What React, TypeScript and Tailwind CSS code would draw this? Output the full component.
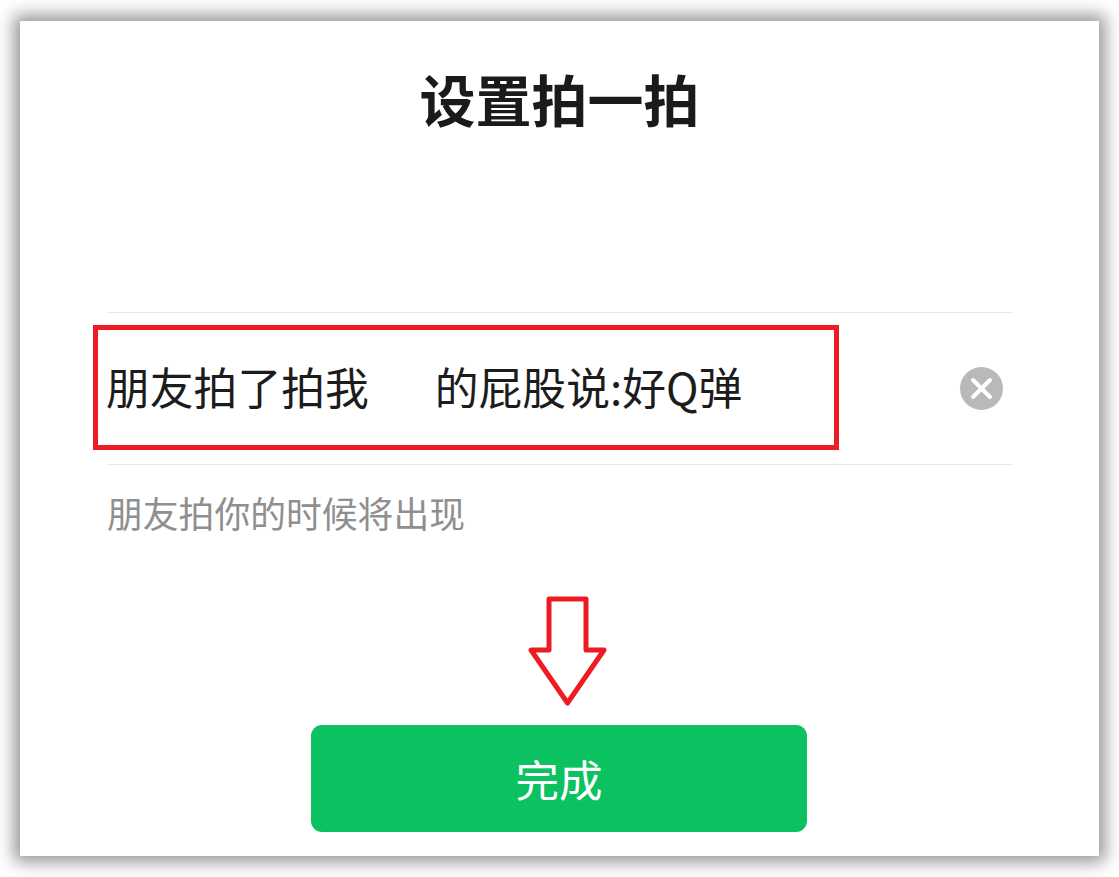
const CJK = 'font-["Noto_Sans_CJK_SC","Noto_Sans",sans-serif]';

function ArrowDown() {
  return (
    <svg width="80" height="112" viewBox="0 0 80 112" fill="none" className="block">
      <path
        d="M21 3H58V54H76L39.500 107L3 54H21Z"
        stroke="#ed1c24"
        strokeWidth="5"
        strokeLinejoin="round"
      />
    </svg>
  );
}

export default function App() {
  return (
    <div className={`w-[1119px] h-[877px] bg-white pt-[21px] pl-[20px] overflow-hidden ${CJK}`}>
      <div className="w-[1079px] h-[835px] bg-white shadow-[0_0_16px_6px_rgba(0,0,0,0.42)] flex flex-col px-[87px]">
        <h1 className="mt-[37px] h-[80px] leading-[80px] text-center text-[56px] font-bold text-[#1a1a1a]">
          设置拍一拍
        </h1>

        <div className="mt-[174px] w-[906px] h-[153px] border-y border-[#e8e8e8] flex items-center">
          <div className="-ml-[14px] mb-[3px] w-[746px] h-[125px] border-[5px] border-[#ed1c24] flex items-center pl-[8px] text-[43.800px] text-[#1c1c1c]">
            <span>朋友拍了拍我</span>
            <span className="ml-[66px]">的屁股说:好Q弹</span>
          </div>
          <div className="ml-[121px] w-[43px] h-[43px] rounded-full bg-[#b9b9b9] flex items-center justify-center">
            <svg width="25" height="25" viewBox="0 0 25 25" fill="none">
              <path d="M4 4L21 21M21 4L4 21" stroke="#fff" strokeWidth="4" strokeLinecap="round" />
            </svg>
          </div>
        </div>

        <p className="mt-[21px] h-[52px] leading-[52px] text-[35.800px] text-[#8f8f8f]">朋友拍你的时候将出现</p>

        <div className="mt-[58px] pl-[421px]">
          <ArrowDown />
        </div>

        <button className="mt-[17px] ml-[204px] w-[496px] h-[107px] rounded-[11px] bg-[#0bc160] text-white text-[43.500px]">
          完成
        </button>
      </div>
    </div>
  );
}
